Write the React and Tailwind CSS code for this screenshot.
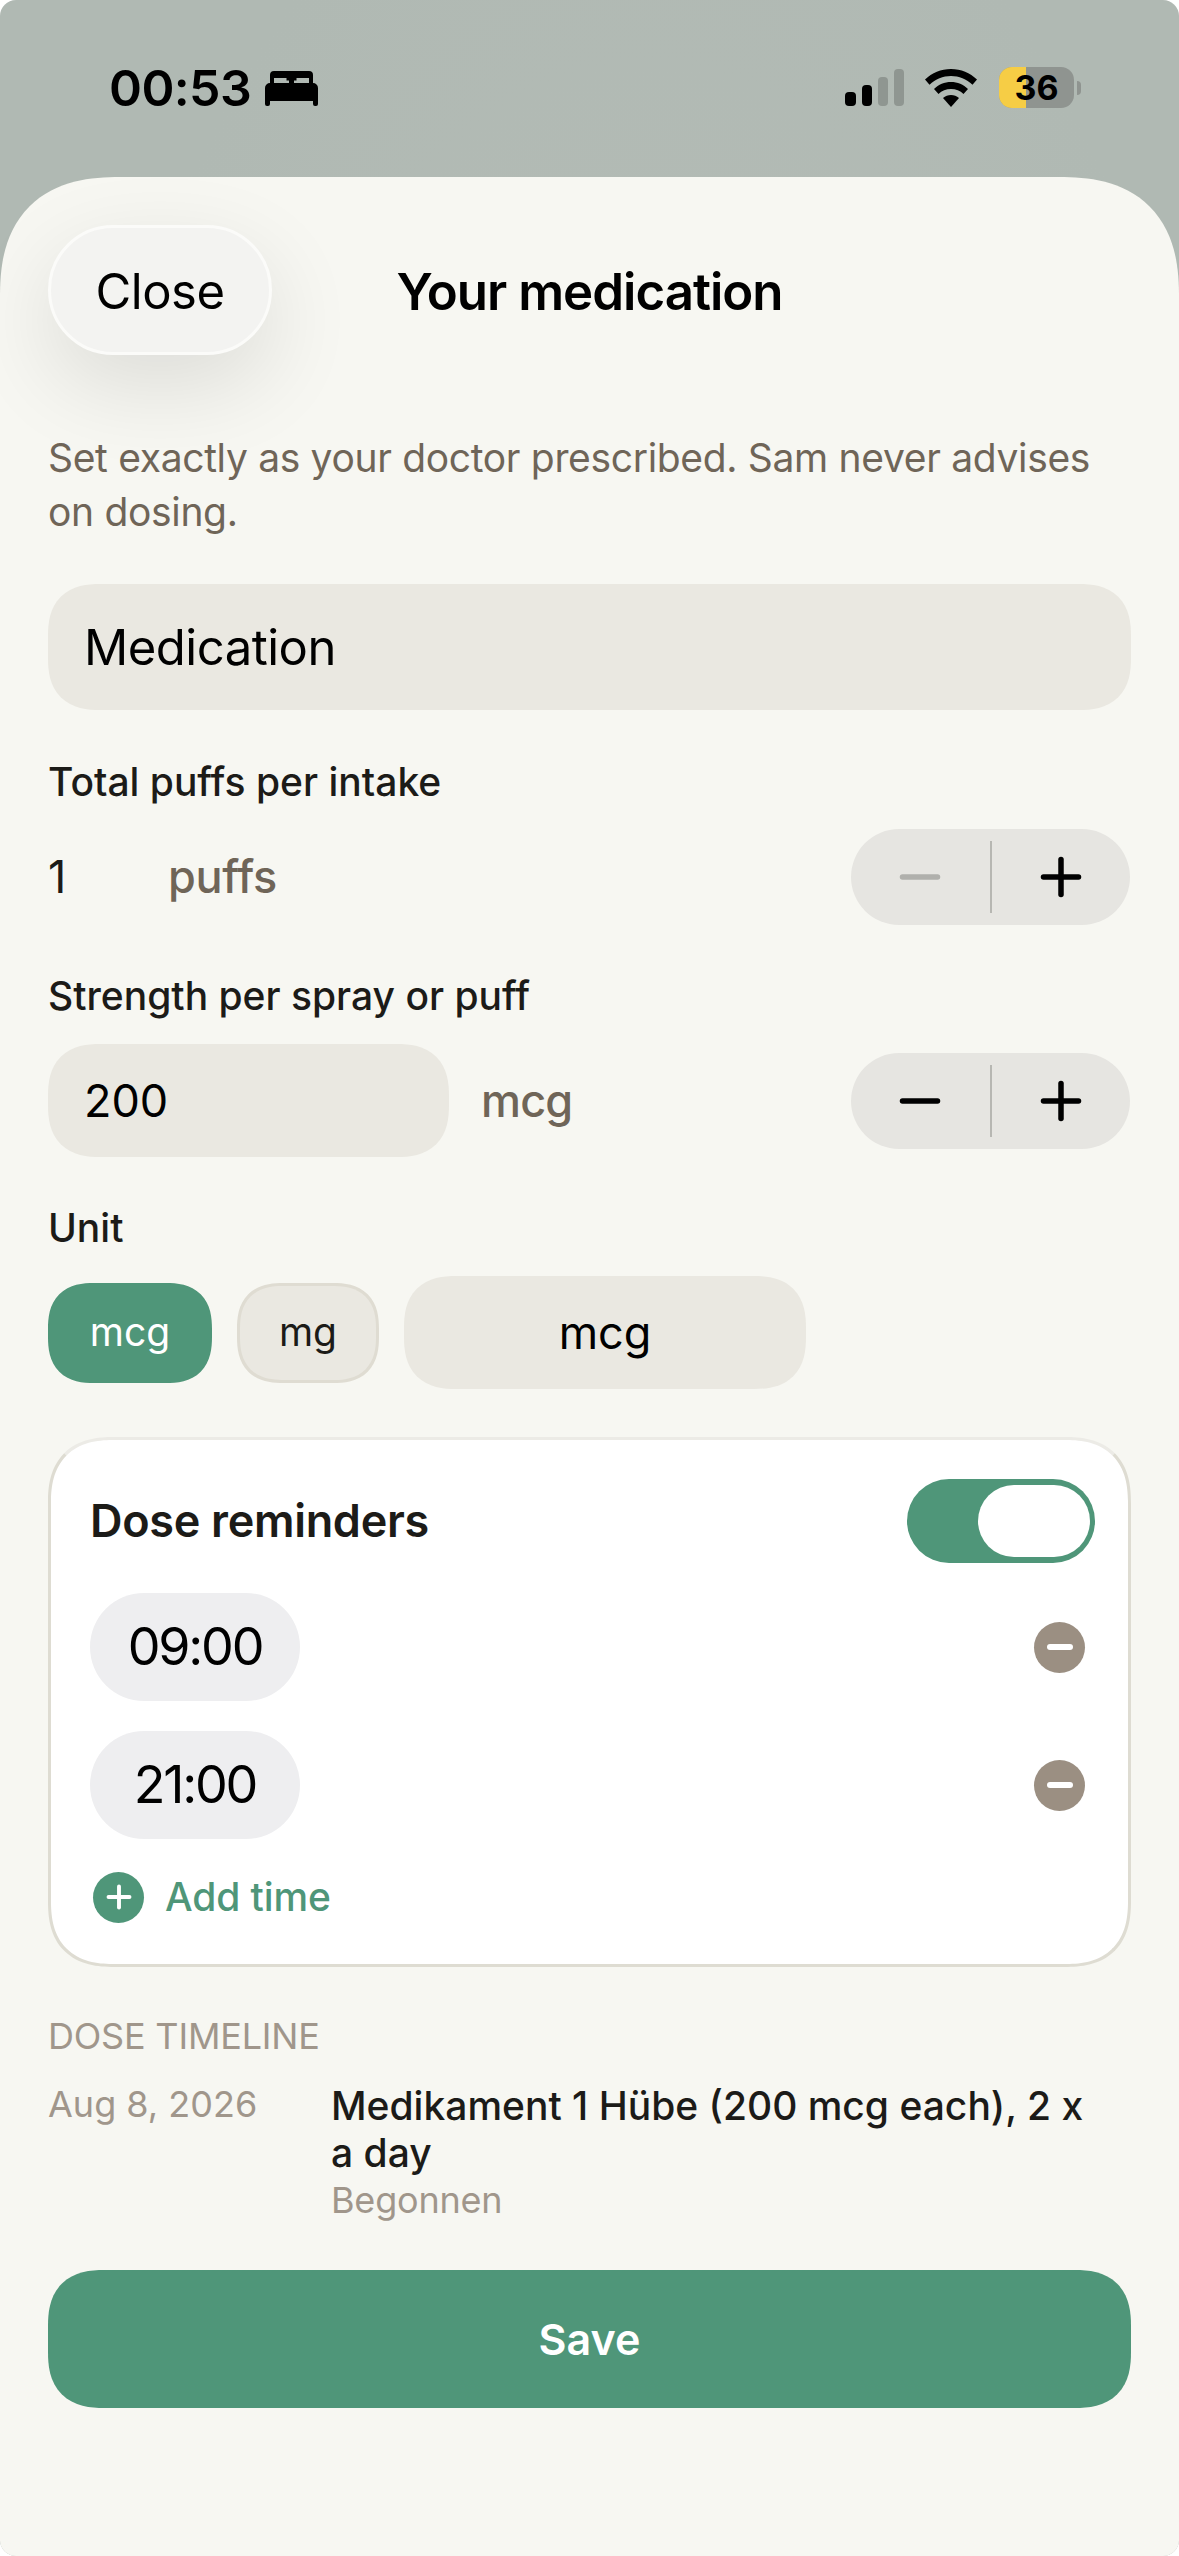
import { Plus, Minus } from 'lucide-react';

function BedIcon() {
    return (
        <svg width="53" height="35" viewBox="0 0 53 35" fill="black">
            <path
                fillRule="evenodd"
                d="M9 0h35a4 4 0 0 1 4 4v10H5V4a4 4 0 0 1 4-4zM9 7v5h15V9.500h-2.500V7zM44 7H31.500v2.500H29V12h15z"
            />
            <path d="M5 12h43a5 5 0 0 1 5 5v16a2 2 0 0 1-2 2h-1a2 2 0 0 1-2-2v-3H5v3a2 2 0 0 1-2 2H2a2 2 0 0 1-2-2V17a5 5 0 0 1 5-5z" />
        </svg>
    );
}

function WifiIcon() {
    return (
        <svg width="52" height="38" viewBox="0 0 52 38" fill="black">
            <path d="M26 0c10 0 19 4 26 10.500l-4.500 5.200C41.500 10 34 7 26 7S10.500 10 4.500 15.700L0 10.500C7 4 16 0 26 0z" />
            <path d="M26 13c6.500 0 12.500 2.500 17 7l-4.500 5c-3.300-3.300-7.700-5-12.500-5s-9.200 1.700-12.500 5L9 20c4.500-4.500 10.500-7 17-7z" />
            <path d="M26 26c3 0 5.700 1 8 3L26 38l-8-9c2.300-2 5-3 8-3z" />
        </svg>
    );
}

function StatusBar() {
    return (
        <div className="h-[177px] flex justify-between pl-[109px] pr-[98px] pt-[67px]">
            <div className="flex items-start gap-[14px]">
                <span className="text-[50px] leading-[42px] font-semibold tracking-[-0.6px] text-black">00:53</span>
                <div className="pt-[4px]">
                    <BedIcon />
                </div>
            </div>
            <div className="flex items-start">
                <div className="flex items-end gap-[6px] h-[39px] mr-[21px]">
                    <div className="w-[11px] h-[14px] rounded-[4px] bg-black" />
                    <div className="w-[10px] h-[21px] rounded-[4px] bg-black" />
                    <div className="w-[10px] h-[29px] rounded-[4px] bg-[#8f9691]" />
                    <div className="w-[10px] h-[37px] rounded-[4px] bg-[#8f9691]" />
                </div>
                <div className="pt-[2px] mr-[22px]">
                    <WifiIcon />
                </div>
                <div className="flex items-center">
                    <div className="relative w-[75px] h-[41px] rounded-[13px] overflow-hidden bg-[#8f9490] flex items-center justify-center">
                        <div className="absolute left-0 top-0 bottom-0 w-[27px] bg-[#f6cd45]" />
                        <span className="relative text-[34px] font-bold leading-none text-black">36</span>
                    </div>
                    <div className="w-[4px] h-[14px] ml-[3px] rounded-r-[4px] bg-[#8f9490]" />
                </div>
            </div>
        </div>
    );
}

function Stepper({ minusDisabled }) {
    return (
        <div className="w-[279px] h-[96px] mr-[1px] rounded-full bg-[#e6e5e1] flex items-center">
            <div className="flex-1 flex justify-center">
                <Minus size={60} strokeWidth={2.2} className={minusDisabled ? 'text-[#b0b0ac]' : 'text-black'} />
            </div>
            <div className="w-[2px] h-[72px] bg-[#b7b7b2]" />
            <div className="flex-1 flex justify-center">
                <Plus size={60} strokeWidth={2.2} className="text-black" />
            </div>
        </div>
    );
}

function TimeRow({ time }) {
    return (
        <div className="flex items-center justify-between pr-[10px]">
            <div className="w-[210px] h-[108px] rounded-full bg-[#eeeef0] flex items-center justify-center text-[52px] tracking-[-2.2px] text-black">
                {time}
            </div>
            <div className="w-[51px] h-[51px] rounded-full bg-[#9b8f82] flex items-center justify-center">
                <div className="w-[26px] h-[6px] rounded-[3px] bg-white" />
            </div>
        </div>
    );
}

export default function App() {
    return (
        <div className="w-[1179px] h-[2556px] bg-white font-['Inter','Noto_Sans',sans-serif]">
            <div className="h-full rounded-[16px] overflow-hidden bg-[radial-gradient(ellipse_70%_100%_at_55%_90%,#bbbfb9_0%,#b6bdb7_50%,#b0b9b3_100%)] flex flex-col">
                <StatusBar />

                {/* Sheet */}
                <div className="flex-1 rounded-t-[120px] [corner-shape:superellipse(1.3)] bg-[#f7f7f2] px-[48px] pt-[48px]">
                    {/* Header */}
                    <div className="relative h-[130px] flex items-center justify-center">
                        <div className="absolute left-0 top-0 w-[224px] h-[130px] rounded-full bg-[#f3f3f1] border-[3px] border-[#fbfbf9] shadow-[0_30px_90px_rgba(0,0,0,0.11)] flex items-center justify-center text-[49px] tracking-[-0.5px] pt-[4px] text-black">
                            Close
                        </div>
                        <h1 className="text-[51px] font-semibold tracking-[-1px] pt-[4px] text-black">Your medication</h1>
                    </div>

                    <p className="mt-[76px] text-[39px] leading-[54px] tracking-[-0.33px] text-[#6f6558]">
                        Set exactly as your doctor prescribed. Sam never advises on dosing.
                    </p>

                    <div className="mt-[45px] h-[126px] rounded-[52px] [corner-shape:superellipse(1.3)] bg-[#eae8e1] flex items-center px-[36px] pt-[2px] text-[49px] tracking-[-0.5px] text-black">
                        Medication
                    </div>

                    <div className="mt-[49px] text-[39px] leading-[46px] font-medium text-[#1c1b18]">Total puffs per intake</div>
                    <div className="mt-[24px] flex items-center">
                        <span className="w-[120px] text-[45px] text-[#1c1b18]">1</span>
                        <span className="flex-1 text-[45px] font-medium tracking-[-0.3px] text-[#6f6558]">puffs</span>
                        <Stepper minusDisabled />
                    </div>

                    <div className="mt-[48px] text-[39px] leading-[46px] font-medium text-[#1c1b18]">Strength per spray or puff</div>
                    <div className="mt-[25px] flex items-center">
                        <div className="w-[401px] h-[113px] rounded-[52px] [corner-shape:superellipse(1.3)] bg-[#eae8e1] flex items-center px-[36px] text-[45px] text-black">200</div>
                        <span className="flex-1 ml-[32px] text-[45px] font-medium tracking-[-0.8px] text-[#6f6558]">mcg</span>
                        <Stepper />
                    </div>

                    <div className="mt-[48px] text-[39px] leading-[46px] font-medium text-[#1c1b18]">Unit</div>
                    <div className="mt-[25px] flex items-center gap-[25px]">
                        <div className="w-[164px] h-[100px] rounded-[46px] [corner-shape:superellipse(1.3)] bg-[#4f9679] flex items-center justify-center text-[39px] text-white">mcg</div>
                        <div className="w-[142px] h-[100px] rounded-[46px] [corner-shape:superellipse(1.3)] bg-[#eae8e1] border-[3px] border-[#dfdcd2] flex items-center justify-center text-[39px] text-[#1c1b18]">mg</div>
                        <div className="w-[402px] h-[113px] rounded-[52px] [corner-shape:superellipse(1.3)] bg-[#eae8e1] flex items-center justify-center text-[45px] text-black">mcg</div>
                    </div>

                    {/* Reminders card */}
                    <div className="mt-[48px] h-[530px] rounded-[66px] [corner-shape:superellipse(1.3)] bg-white border-[3px] border-[#dedcd2] border-t-[#ecebe6] pl-[39px] pr-[33px] pt-[39px]">
                        <div className="flex items-center justify-between">
                            <span className="text-[45px] font-semibold tracking-[-0.3px] text-[#1c1b18]">Dose reminders</span>
                            <div className="w-[188px] h-[84px] rounded-full bg-[#4f9679] flex items-center justify-end pr-[5px]">
                                <div className="w-[112px] h-[72px] rounded-full bg-white" />
                            </div>
                        </div>
                        <div className="mt-[30px] flex flex-col gap-[30px]">
                            <TimeRow time="09:00" />
                            <TimeRow time="21:00" />
                        </div>
                        <div className="mt-[29px] flex items-center gap-[21px] pl-[3px]">
                            <div className="w-[51px] h-[51px] rounded-full bg-[#4f9679] flex items-center justify-center">
                                <Plus size={36} strokeWidth={2.6} className="text-white" />
                            </div>
                            <span className="text-[39px] font-medium tracking-[-0.1px] text-[#4f9679]">Add time</span>
                        </div>
                    </div>

                    {/* Timeline */}
                    <div className="mt-[47px] text-[36px] leading-[44px] tracking-[-0.2px] text-[#a0968b]">DOSE TIMELINE</div>
                    <div className="mt-[24px] flex items-start">
                        <span className="w-[283px] shrink-0 text-[36px] leading-[44px] text-[#a0968b]">Aug 8, 2026</span>
                        <div className="flex-1 pr-[40px]">
                            <div className="text-[39px] leading-[47px] font-medium text-[#1c1b18]">Medikament 1 Hübe (200 mcg each), 2 x a day</div>
                            <div className="text-[36px] leading-[49px] tracking-[-0.2px] text-[#a0968b]">Begonnen</div>
                        </div>
                    </div>

                    <div className="mt-[45px] h-[138px] rounded-[56px] [corner-shape:superellipse(1.3)] bg-[#4f9679] flex items-center justify-center text-[43px] font-semibold text-white">
                        Save
                    </div>
                </div>
            </div>
        </div>
    );
}
